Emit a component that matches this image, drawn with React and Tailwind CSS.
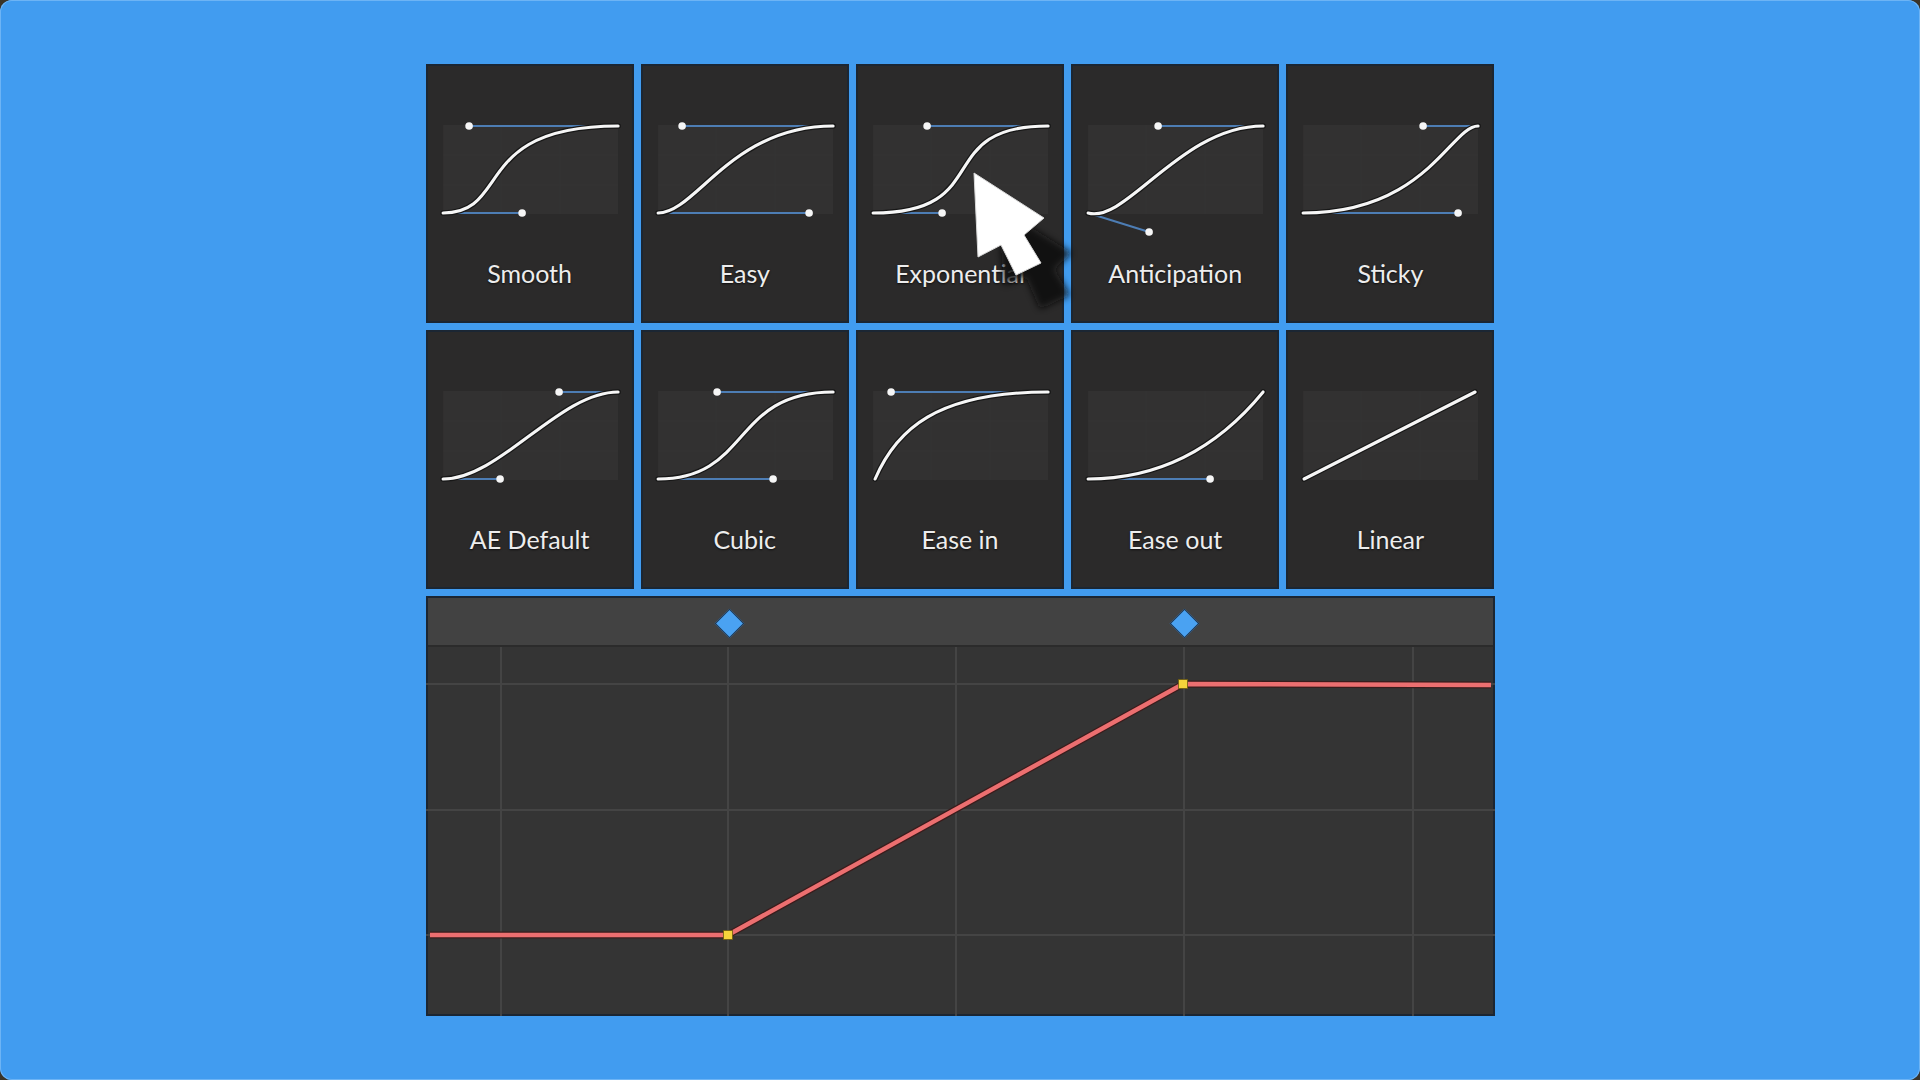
const presets = [
  {
    name: "Smooth",
    d: "M17,149 C85,149 45,62 192,62",
    handles: [
      [17, 149, 96, 149],
      [43, 62, 192, 62],
    ],
  },
  {
    name: "Easy",
    d: "M17,149 C55,149 90,62 192,62",
    handles: [
      [17, 149, 168, 149],
      [41, 62, 192, 62],
    ],
  },
  {
    name: "Exponential",
    d: "M17,149 C140,149 75,62 192,62",
    handles: [
      [17, 149, 86, 149],
      [71, 62, 192, 62],
    ],
  },
  {
    name: "Anticipation",
    d: "M17,149 C55,160 110,62 192,62",
    handles: [
      [17, 149, 78, 168],
      [87, 62, 192, 62],
    ],
  },
  {
    name: "Sticky",
    d: "M17,149 C140,149 165,62 192,62",
    handles: [
      [17, 149, 172, 149],
      [137, 62, 192, 62],
    ],
  },
  {
    name: "AE Default",
    d: "M17,149 C74,149 133,62 192,62",
    handles: [
      [17, 149, 74, 149],
      [133, 62, 192, 62],
    ],
  },
  {
    name: "Cubic",
    d: "M17,149 C110,149 90,62 192,62",
    handles: [
      [17, 149, 132, 149],
      [76, 62, 192, 62],
    ],
  },
  {
    name: "Ease in",
    d: "M19,149 C40,100 80,62 192,62",
    handles: [[35, 62, 192, 62]],
  },
  {
    name: "Ease out",
    d: "M17,149 C110,149 165,95 192,62",
    handles: [[17, 149, 139, 149]],
  },
  {
    name: "Linear",
    d: "M18,149 L189,62",
    handles: [],
  },
];

function PresetCell({ preset }) {
  return (
    <div className="h-[259px] bg-[#2b2a2a] ring-2 ring-inset ring-[#1b2633] flex flex-col">
      <svg viewBox="0 0 208 180" className="w-full h-[180px]">
        <rect x="17" y="61" width="175" height="89" fill="#323131" />
        <line x1="17" y1="91" x2="192" y2="91" stroke="#353434" strokeWidth="1" />
        <line x1="17" y1="121" x2="192" y2="121" stroke="#353434" strokeWidth="1" />
        <line x1="75" y1="61" x2="75" y2="150" stroke="#353434" strokeWidth="1" />
        <line x1="134" y1="61" x2="134" y2="150" stroke="#353434" strokeWidth="1" />
        {preset.handles.map((h, i) => (
          <line
            key={i}
            x1={h[0]}
            y1={h[1]}
            x2={h[2]}
            y2={h[3]}
            stroke="#4d7db4"
            strokeWidth="2"
          />
        ))}
        <path d={preset.d} fill="none" stroke="#171717" strokeWidth="5.6" strokeLinecap="round" />
        <path d={preset.d} fill="none" stroke="#f6f6f6" strokeWidth="3.1" strokeLinecap="round" />
        {preset.handles.map((h, i) => {
          const dot = h[0] < 20 ? [h[2], h[3]] : [h[0], h[1]];
          return <circle key={i} cx={dot[0]} cy={dot[1]} r="3.8" fill="#f6f6f6" />;
        })}
      </svg>
      <div className="mt-[15px] h-[28px] leading-[28px] text-center text-[25px] text-[#ededed] font-['Lato',_'Noto_Sans',_sans-serif] [text-shadow:0_1px_2px_rgba(0,0,0,0.7)]">
        {preset.name}
      </div>
    </div>
  );
}

function GraphPanel() {
  const vLines = [75, 302, 530, 758, 987];
  const hLines = [37, 163, 288];
  return (
    <div className="h-[420px] bg-[#343434] ring-2 ring-inset ring-[#1b2633] flex flex-col">
      <div className="relative h-[49px] bg-[#424242] border-b-2 border-[#2b2b2b] mx-[2px] mt-[2px]">
        <div className="absolute left-[291px] top-[15px] w-[21px] h-[21px] rotate-45 bg-[#4aa2f2] border border-[#1e3550]" />
        <div className="absolute left-[746px] top-[15px] w-[21px] h-[21px] rotate-45 bg-[#4aa2f2] border border-[#1e3550]" />
      </div>
      <svg viewBox="0 0 1069 369" className="w-full h-[369px]">
        {vLines.map((x) => (
          <line key={x} x1={x} y1="0" x2={x} y2="369" stroke="#444444" strokeWidth="2" />
        ))}
        {hLines.map((y) => (
          <line key={y} x1="0" y1={y} x2="1069" y2={y} stroke="#444444" strokeWidth="2" />
        ))}
        <polyline
          points="4,288 302,288 757,37 1065,38"
          fill="none"
          stroke="#3a1c1c"
          strokeWidth="7"
          strokeLinejoin="round"
        />
        <polyline
          points="4,288 302,288 757,37 1065,38"
          fill="none"
          stroke="#ec6f70"
          strokeWidth="4.5"
          strokeLinejoin="round"
        />
        <rect x="297.5" y="283.5" width="9" height="9" fill="#f5d33b" stroke="#6b5a12" strokeWidth="0.8" />
        <rect x="752.5" y="32.5" width="9" height="9" fill="#f5d33b" stroke="#6b5a12" strokeWidth="0.8" />
      </svg>
    </div>
  );
}

function Cursor() {
  return (
    <svg
      className="absolute left-[540px] top-[101px] pointer-events-none"
      width="120"
      height="150"
      viewBox="-8 -8 120 150"
    >
      <defs>
        <filter id="cursorShadow" x="-30%" y="-30%" width="160%" height="160%">
          <feGaussianBlur stdDeviation="3.5" />
        </filter>
      </defs>
      <polygon
        points="24,34 30,112 52,104 66,136 96,122 80,96 98,80"
        fill="#0e0e0e"
        opacity="0.85"
        filter="url(#cursorShadow)"
      />
      <polygon
        points="0,0 4,84 27,72 42,102 67,90 50,62 70,45"
        fill="#ffffff"
        stroke="#d8d8d8"
        strokeWidth="1"
        strokeLinejoin="round"
      />
    </svg>
  );
}

export default function App() {
  return (
    <div className="w-[1920px] h-[1080px] bg-[#3a3429]">
      <div className="w-full h-full rounded-[12px] bg-[#419cf0] ring-1 ring-inset ring-[#6db4f5] flex justify-center pt-[64px]">
        <div className="relative w-[1069px] flex flex-col gap-[7px]">
          <div className="grid grid-cols-5 gap-[7px]">
            {presets.map((p) => (
              <PresetCell key={p.name} preset={p} />
            ))}
          </div>
          <GraphPanel />
          <Cursor />
        </div>
      </div>
    </div>
  );
}
